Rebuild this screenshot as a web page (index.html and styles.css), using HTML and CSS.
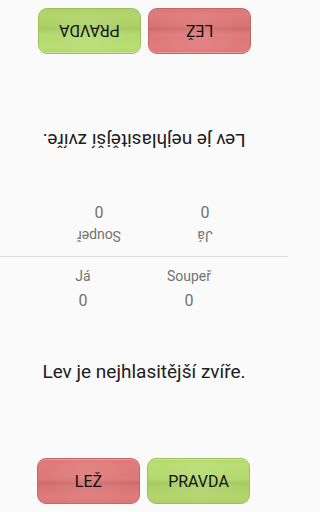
FILE: index.html
```html
<!DOCTYPE html>
<html lang="cs">
<head>
<meta charset="utf-8">
<title>Pravda nebo lež</title>
<link rel="stylesheet" href="styles.css">
</head>
<body>
<div class="screen">
  <section class="half half-top">
    <div class="scores">
      <div class="col"><div class="label">Já</div><div class="score">0</div></div>
      <div class="col"><div class="label">Soupeř</div><div class="score">0</div></div>
    </div>
    <p class="question">Lev je nejhlasitější zvíře.</p>
    <div class="buttons">
      <button class="btn btn-lie">LEŽ</button>
      <button class="btn btn-true">PRAVDA</button>
    </div>
  </section>
  <section class="half half-bottom">
    <div class="scores">
      <div class="col"><div class="label">Já</div><div class="score">0</div></div>
      <div class="col"><div class="label">Soupeř</div><div class="score">0</div></div>
    </div>
    <p class="question">Lev je nejhlasitější zvíře.</p>
    <div class="buttons">
      <button class="btn btn-lie">LEŽ</button>
      <button class="btn btn-true">PRAVDA</button>
    </div>
  </section>
</div>
</body>
</html>
```
FILE: styles.css
```css
html, body {
  margin: 0;
  padding: 0;
  background: #fafafa;
}
body {
  font-family: Roboto, "Liberation Sans", sans-serif;
  width: 288px;
  height: 512px;
  overflow: hidden;
}
.screen {
  display: flex;
  flex-direction: column;
  height: 512px;
}
.half {
  box-sizing: border-box;
  height: 256px;
  display: flex;
  flex-direction: column;
  border-top: 1px solid transparent;
}
.half-top {
  transform: rotate(180deg);
}
.half-bottom {
  border-top-color: #dcdcdc;
}
.scores {
  display: flex;
  padding-left: 43px;
  gap: 26px;
  margin-top: 11px;
}
.col {
  width: 80px;
  text-align: center;
  color: #737373;
}
.label {
  font-size: 14px;
}
.score {
  font-size: 16px;
  margin-top: 7px;
}
.question {
  margin: 50px 0 0;
  text-align: center;
  font-size: 19px;
  color: #202020;
}
.buttons {
  margin-top: auto;
  margin-bottom: 8px;
  display: flex;
  justify-content: center;
  gap: 7px;
  padding-right: 1px;
}
.btn {
  box-sizing: border-box;
  width: 103px;
  height: 46px;
  border-radius: 9px;
  font-family: Roboto, "Liberation Sans", sans-serif;
  font-size: 16px;
  color: #111;
  padding: 0;
  cursor: pointer;
}
.btn-lie {
  border: 1px solid #c86565;
  background:
    radial-gradient(ellipse 60% 90% at 50% 45%, rgba(255,255,255,0.10), rgba(255,255,255,0) 70%),
    linear-gradient(to bottom, #de7777 0%, #e07b7b 12%, #dd7878 45%, #cd6b6b 55%, #d87373 62%, #e07b7b 85%, #dc7878 100%);
  box-shadow: inset 0 1px 0 rgba(255,255,255,0.25);
}
.btn-true {
  border: 1px solid #9cc35a;
  background:
    radial-gradient(ellipse 60% 90% at 50% 45%, rgba(255,255,255,0.12), rgba(255,255,255,0) 70%),
    linear-gradient(to bottom, #b2d76d 0%, #b8dd72 12%, #b3d86d 45%, #a5ca62 55%, #accf67 62%, #b2d66c 85%, #acd067 100%);
  box-shadow: inset 0 1px 0 rgba(255,255,255,0.3);
}
```
